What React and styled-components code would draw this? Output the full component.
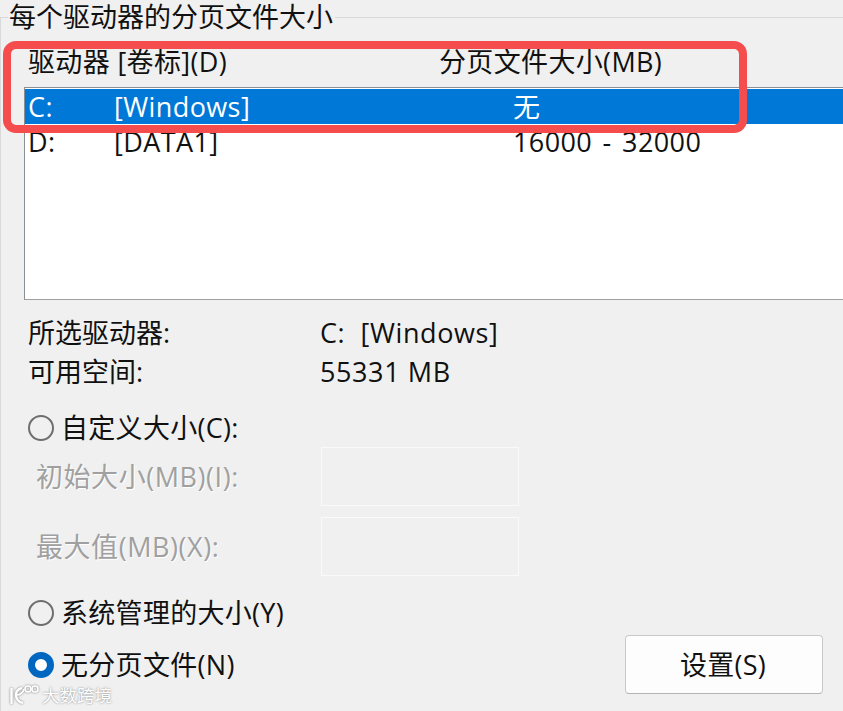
import React from 'react';
import styled, { createGlobalStyle } from 'styled-components';

const GlobalStyle = createGlobalStyle`
  html, body {
    margin: 0;
    padding: 0;
    background: #f0f0f0;
  }
  * {
    box-sizing: border-box;
  }
`;

const Page = styled.div`
  position: relative;
  width: 843px;
  height: 711px;
  overflow: hidden;
  background: #f0f0f0;
  color: #111;
  font-family: "Open Sans", "Noto Sans CJK SC", sans-serif;
  font-size: 27px;
  line-height: 36px;
`;

const Group = styled.div`
  margin-top: 17px;
  height: 694px;
  border-top: 1px solid #d9d9d9;
  border-left: 1px solid #d9d9d9;
`;

const Legend = styled.div`
  width: fit-content;
  height: 30px;
  margin: -16px 0 0 7px;
  padding: 0 2px 0 1px;
  line-height: 30px;
  background: linear-gradient(#f0f0f0, #f0f0f0) no-repeat top / 100% 24px;
`;

const ColumnHeader = styled.div`
  display: grid;
  grid-template-columns: 411px 1fr;
  height: 55px;
  padding: 12px 0 0 27px;
  letter-spacing: 0.35px;
`;

const ListBox = styled.div`
  height: 213px;
  margin-left: 23px;
  border: 1px solid #8a8f94;
  border-right: none;
  border-bottom-color: #a0a0a0;
  padding-top: 1px;
  background: #fff;
`;

const DriveRow = styled.div`
  display: grid;
  grid-template-columns: 86px 399px 1fr;
  height: 35px;
  padding-left: 3px;
  line-height: 35px;
  letter-spacing: 0.4px;
  word-spacing: 3px;
  color: ${(props) => (props.selected ? '#fff' : '#111')};
  background: ${(props) => (props.selected ? '#0078d7' : 'transparent')};
`;

const InfoList = styled.div`
  display: grid;
  grid-template-columns: 292px 1fr;
  grid-auto-rows: 39px;
  margin: 13px 0 8px;
  padding-left: 27px;
  line-height: 39px;
`;

const InfoValue = styled.span`
  letter-spacing: 0.6px;
`;

const RadioRow = styled.div`
  display: flex;
  align-items: center;
  height: ${(props) => props.height}px;
  margin-top: ${(props) => props.offset || 0}px;
  padding-left: 27px;
`;

const RadioMark = styled.span`
  flex: none;
  width: 26px;
  height: 26px;
  border-radius: 50%;
  background: ${(props) => (props.checked ? '#fff' : 'transparent')};
  border: ${(props) => (props.checked ? '7px solid #0067c0' : '2px solid #6e6e6e')};
`;

const SizeRow = styled.div`
  display: grid;
  grid-template-columns: 285px 198px;
  align-items: center;
  height: 59px;
  padding-left: 35px;
  color: #a0a0a0;
  letter-spacing: 0.55px;
  text-shadow: 1px 1px 0 #fff;
`;

const SizeRows = styled.div`
  display: flex;
  flex-direction: column;
  gap: 11px;
  margin-top: -10px;
`;

const SizeInput = styled.div`
  height: 59px;
  border: 1px solid #fafafa;
`;

const BottomRow = styled.div`
  display: flex;
  align-items: center;
  justify-content: space-between;
  height: 59px;
  padding: 0 20px 0 27px;
`;

const RadioLabel = styled.div`
  display: flex;
  align-items: center;
  gap: 7px;
  letter-spacing: 0.3px;
`;

const SetButton = styled.button`
  width: 198px;
  height: 59px;
  padding: 0 2px 0 0;
  border: 1px solid #c8c8c8;
  border-bottom-color: #b4b4b4;
  border-radius: 4px;
  background: #fdfdfd;
  color: #111;
  font: inherit;
  letter-spacing: 0.3px;
`;

const Highlight = styled.div`
  position: absolute;
  top: 41px;
  left: 3px;
  width: 744px;
  height: 92px;
  border: 8px solid #f54d4d;
  border-radius: 13px;
`;

const Watermark = styled.div`
  position: absolute;
  top: 683px;
  left: 9px;
  display: flex;
  align-items: center;
  gap: 3px;
  color: #fff;
  font-size: 17.5px;
  line-height: 24px;
  text-shadow: 0 0 2px #7c7c7c;
  svg {
    filter: drop-shadow(0 0 1px #7c7c7c);
  }
`;

const Radio = ({ checked, children }) => (
  <RadioLabel>
    <RadioMark checked={checked} />
    {children}
  </RadioLabel>
);

const App = () => {
  return (
    <Page>
      <GlobalStyle />
      <Group>
        <Legend>每个驱动器的分页文件大小</Legend>
        <ColumnHeader>
          <span>驱动器 [卷标](D)</span>
          <span>分页文件大小(MB)</span>
        </ColumnHeader>
        <ListBox>
          <DriveRow selected>
            <span>C:</span>
            <span>[Windows]</span>
            <span>无</span>
          </DriveRow>
          <DriveRow>
            <span>D:</span>
            <span>[DATA1]</span>
            <span>16000 - 32000</span>
          </DriveRow>
        </ListBox>
        <InfoList>
          <span>所选驱动器:</span>
          <InfoValue>C:&nbsp;&nbsp;[Windows]</InfoValue>
          <span>可用空间:</span>
          <InfoValue>55331 MB</InfoValue>
        </InfoList>
        <RadioRow height={58}>
          <Radio>自定义大小(C):</Radio>
        </RadioRow>
        <SizeRows>
          <SizeRow>
            <span>初始大小(MB)(I):</span>
            <SizeInput />
          </SizeRow>
          <SizeRow>
            <span>最大值(MB)(X):</span>
            <SizeInput />
          </SizeRow>
        </SizeRows>
        <RadioRow height={44} offset={15}>
          <Radio>系统管理的大小(Y)</Radio>
        </RadioRow>
        <BottomRow>
          <Radio checked>无分页文件(N)</Radio>
          <SetButton>设置(S)</SetButton>
        </BottomRow>
      </Group>
      <Highlight />
      <Watermark>
        <svg width="30" height="22" viewBox="0 0 30 22" fill="none" stroke="#fff" strokeWidth="2.4">
          <path d="M2.5 4v16" />
          <path d="M13 4c-4 1-6 3.500-6 7s2.500 7 7 8" />
          <path d="M7 11c4 0 7-2 8-6" strokeWidth="1.600" />
          <circle cx="19" cy="5" r="3" strokeWidth="1.600" />
          <circle cx="26" cy="5" r="3" strokeWidth="1.600" />
        </svg>
        <span>大数跨境</span>
      </Watermark>
    </Page>
  );
};

export default App;
